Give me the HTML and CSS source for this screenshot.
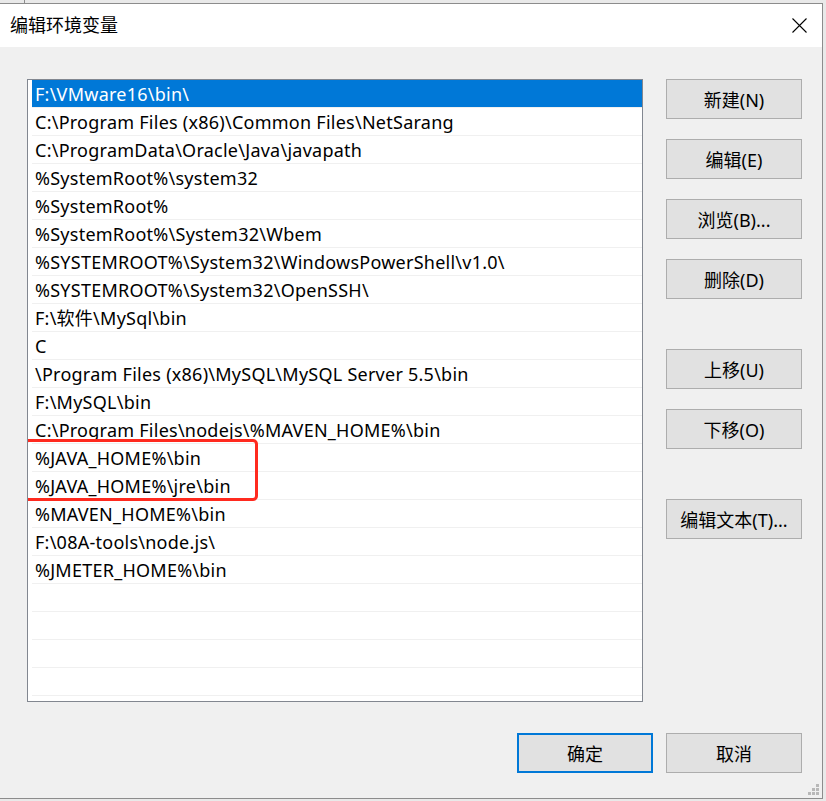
FILE: index.html
```html
<!DOCTYPE html>
<html lang="zh-CN">
<head>
<meta charset="utf-8">
<title>编辑环境变量</title>
<link rel="stylesheet" href="styles.css">
</head>
<body>
<div class="strip"><span class="strip-line"></span></div>
<div class="dialog">
  <div class="titlebar">
    <span class="title">编辑环境变量</span>
    <svg class="close" width="15" height="15" viewBox="0 0 15 15"><path d="M0.5 0.5 L14.5 14.5 M14.5 0.5 L0.5 14.5" stroke="#000" stroke-width="1.1" fill="none"/></svg>
  </div>
  <div class="body">
    <div class="main">
      <div class="list">
        <div class="row sel">F:\VMware16\bin\</div>
        <div class="row">C:\Program Files (x86)\Common Files\NetSarang</div>
        <div class="row">C:\ProgramData\Oracle\Java\javapath</div>
        <div class="row">%SystemRoot%\system32</div>
        <div class="row">%SystemRoot%</div>
        <div class="row">%SystemRoot%\System32\Wbem</div>
        <div class="row">%SYSTEMROOT%\System32\WindowsPowerShell\v1.0\</div>
        <div class="row">%SYSTEMROOT%\System32\OpenSSH\</div>
        <div class="row">F:\软件\MySql\bin</div>
        <div class="row">C</div>
        <div class="row">\Program Files (x86)\MySQL\MySQL Server 5.5\bin</div>
        <div class="row">F:\MySQL\bin</div>
        <div class="row">C:\Program Files\nodejs\%MAVEN_HOME%\bin</div>
        <div class="row">%JAVA_HOME%\bin</div>
        <div class="row">%JAVA_HOME%\jre\bin</div>
        <div class="row">%MAVEN_HOME%\bin</div>
        <div class="row">F:\08A-tools\node.js\</div>
        <div class="row">%JMETER_HOME%\bin</div>
        <div class="row"></div>
        <div class="row"></div>
        <div class="row"></div>
        <div class="row"></div>
        <div class="row"></div>
        <div class="mark"></div>
      </div>
      <div class="side">
        <div class="btn">新建(N)</div>
        <div class="btn">编辑(E)</div>
        <div class="btn">浏览(B)...</div>
        <div class="btn">删除(D)</div>
        <div class="btn gap">上移(U)</div>
        <div class="btn">下移(O)</div>
        <div class="btn gap">编辑文本(T)...</div>
      </div>
    </div>
    <div class="footer">
      <div class="btn primary">确定</div>
      <div class="btn">取消</div>
    </div>
    <svg class="grip" width="12" height="12" viewBox="0 0 12 12" fill="#b8b8b8">
      <rect x="8" y="0" width="3" height="3"/>
      <rect x="4" y="4" width="3" height="3"/><rect x="8" y="4" width="3" height="3"/>
      <rect x="0" y="8" width="3" height="3"/><rect x="4" y="8" width="3" height="3"/><rect x="8" y="8" width="3" height="3"/>
    </svg>
  </div>
</div>
</body>
</html>
```

FILE: styles.css
```css
html, body {
  margin: 0;
  padding: 0;
}
body {
  background: #e9e9e9;
  width: 826px;
  height: 801px;
  overflow: hidden;
  font-family: "Noto Sans", "Noto Sans CJK SC", sans-serif;
  font-size: 18px;
  color: #000;
}
.strip {
  height: 3px;
  display: flex;
}
.strip-line {
  margin-left: 24px;
  width: 1px;
  background: #8c8c8c;
}
.dialog {
  width: 822px;
  height: 794px;
  border-top: 1px solid #8c8c8c;
  border-right: 1px solid #8c8c8c;
  border-bottom: 1px solid #8c8c8c;
  background: #f0f0f0;
  display: flex;
  flex-direction: column;
}
.titlebar {
  height: 43px;
  background: #fff;
  display: flex;
  align-items: center;
  justify-content: space-between;
  padding: 0 15px 0 10px;
}
.title {
  font-family: "Noto Sans CJK SC", sans-serif;
  font-size: 18px;
  line-height: 1;
  margin-top: -4px;
}
.close {
  display: block;
}
.body {
  flex: 1;
  position: relative;
  padding: 32px 20px 0 27px;
}
.main {
  display: flex;
}
.list {
  position: relative;
  width: 610px;
  height: 621px;
  border: 1px solid #828790;
  background: #fff;
  padding-left: 4px;
  overflow: hidden;
}
.row {
  height: 27px;
  border-bottom: 1px solid #f0f0f0;
  line-height: 28px;
  padding-left: 3px;
  white-space: nowrap;
  letter-spacing: 0.25px;
}
.row.sel {
  background: #0078d7;
  color: #fff;
}
.mark {
  position: absolute;
  left: -4px;
  top: 359px;
  width: 228px;
  height: 56px;
  border: 3px solid #ff2a1f;
  border-radius: 5px;
}
.side {
  margin-left: 23px;
  display: flex;
  flex-direction: column;
  gap: 20px;
}
.btn {
  width: 134px;
  height: 38px;
  border: 1px solid #adadad;
  background: #e1e1e1;
  display: flex;
  align-items: center;
  justify-content: center;
  font-size: 18px;
}
.btn.gap {
  margin-top: 30px;
}
.btn.primary {
  width: 132px;
  height: 36px;
  border: 2px solid #0078d7;
}
.footer {
  margin-top: 31px;
  display: flex;
  justify-content: flex-end;
  gap: 13px;
}
.grip {
  position: absolute;
  right: 2px;
  bottom: 2px;
}
```
